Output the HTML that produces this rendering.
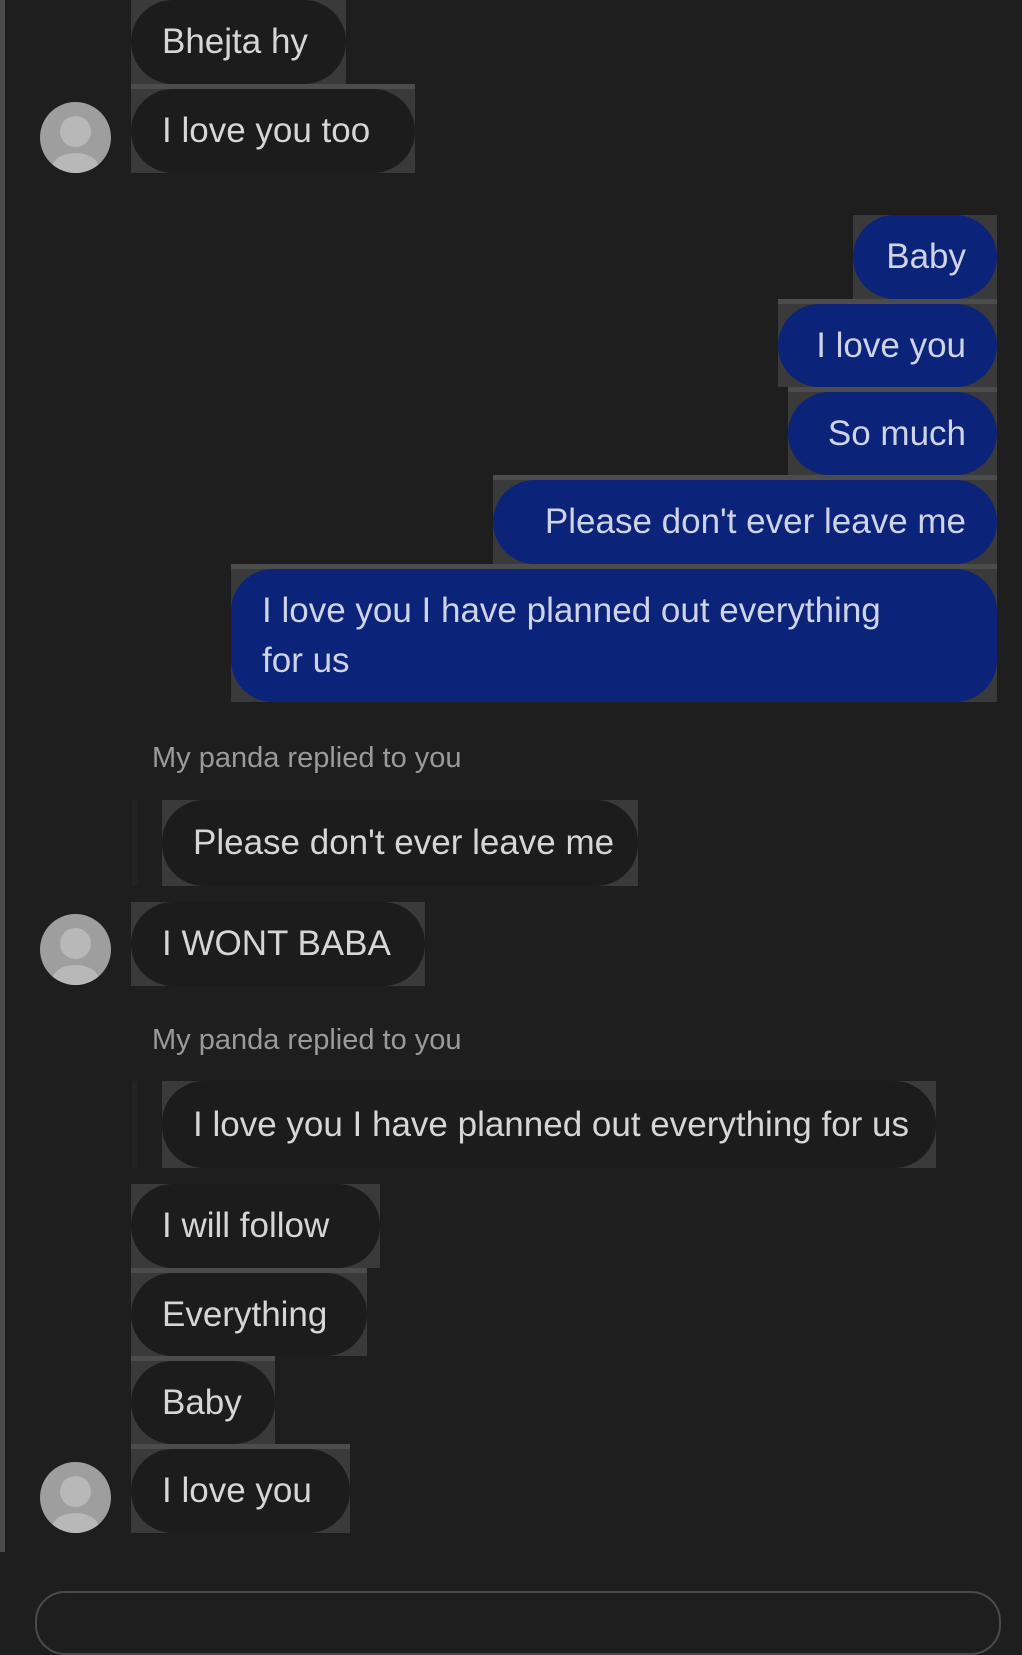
<!DOCTYPE html>
<html><head><meta charset="utf-8"><style>
body{margin:0;width:1022px;height:1600px;background:#1e1e1e;position:relative;overflow:hidden;font-family:"Liberation Sans",Arial,sans-serif;}
.lb{position:absolute;left:0;top:0;width:5px;height:1552px;background:#4a4a4a}
.box{position:absolute;background:#3a3a3a;box-sizing:border-box}
.box.t{border-top:5px solid #4c4c4c}
.b{position:absolute;left:0;right:0;top:0;bottom:0;background:#1c1c1c;border-radius:42px;color:#d6d6d6;font-size:35px;display:flex;align-items:center;box-sizing:border-box;padding:0 31px;white-space:nowrap}
.u .b{background:#0b2379;color:#cfd3e6;justify-content:flex-end}
.av{position:absolute;left:40px;width:71px;height:71px;border-radius:50%;background:#9e9e9e;overflow:hidden}
.av:before{content:"";position:absolute;left:20px;top:14px;width:31px;height:31px;border-radius:50%;background:#b8b8b8}
.av:after{content:"";position:absolute;left:12px;top:51px;width:47px;height:30px;border-radius:50%;background:#b8b8b8}
.rp{position:absolute;left:152px;color:#9a9a9a;font-size:29px}
.input{position:absolute;left:35px;top:1591px;width:962px;height:60px;border:2px solid #4a4a4a;border-radius:30px}
</style></head><body>
<div class="lb"></div>

<div class="box" style="left:131px;top:0;width:215px;height:84px"><div class="b">Bhejta hy</div></div>
<div class="box t" style="left:131px;top:84px;width:284px;height:89px"><div class="b">I love you too</div></div>
<div class="av" style="top:102px"></div>

<div class="box u" style="left:853px;top:215px;width:144px;height:84px"><div class="b">Baby</div></div>
<div class="box u t" style="left:778px;top:299px;width:219px;height:88px"><div class="b">I love you</div></div>
<div class="box u t" style="left:788px;top:387px;width:209px;height:88px"><div class="b">So much</div></div>
<div class="box u t" style="left:493px;top:475px;width:504px;height:89px"><div class="b">Please don't ever leave me</div></div>
<div class="box u t" style="left:231px;top:564px;width:766px;height:138px"><div class="b" style="justify-content:flex-start;line-height:50px;padding:0 10px 0 31px">I love you I have planned out everything<br>for us</div></div>

<div class="rp" style="top:742px">My panda replied to you</div>
<div style="position:absolute;left:132px;top:800px;width:6px;height:86px;background:#232323"></div>
<div class="box" style="left:162px;top:800px;width:476px;height:86px"><div class="b">Please don't ever leave me</div></div>
<div class="box" style="left:131px;top:902px;width:294px;height:84px"><div class="b">I WONT BABA</div></div>
<div class="av" style="top:914px"></div>

<div class="rp" style="top:1024px">My panda replied to you</div>
<div style="position:absolute;left:132px;top:1081px;width:6px;height:87px;background:#232323"></div>
<div class="box" style="left:162px;top:1081px;width:774px;height:87px"><div class="b">I love you I have planned out everything for us</div></div>
<div class="box" style="left:131px;top:1184px;width:249px;height:84px"><div class="b">I will follow</div></div>
<div class="box t" style="left:131px;top:1268px;width:236px;height:88px"><div class="b">Everything</div></div>
<div class="box t" style="left:131px;top:1356px;width:144px;height:88px"><div class="b">Baby</div></div>
<div class="box t" style="left:131px;top:1444px;width:219px;height:89px"><div class="b">I love you</div></div>
<div class="av" style="top:1462px"></div>

<div class="input"></div>
</body></html>
